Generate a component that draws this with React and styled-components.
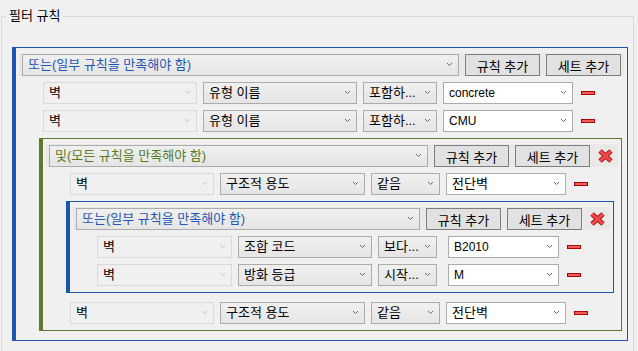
import React from 'react';
import styled, { createGlobalStyle } from 'styled-components';

const GlobalStyle = createGlobalStyle`
	html, body {
		margin: 0;
		padding: 0;
		background: #f0f0f0;
		overflow: hidden;
	}
	body {
		font-family: 'Liberation Sans', 'Noto Sans CJK KR', sans-serif;
		font-size: 13px;
		color: #000;
	}
`;

const TONES = {
	or: { border: '#1f56ad', text: '#1f58b4', label: '또는(일부 규칙을 만족해야 함)' },
	and: { border: '#5b7d2b', text: '#5a7a24', label: '및(모든 규칙을 만족해야 함)' },
};

// column widths for the rule rows at each nesting depth
const COLUMNS = [
	{ widths: [154, 154, 74, 130], valueGap: 6 },
	{ widths: [144, 145, 69, 120], valueGap: 6 },
	{ widths: [135, 134, 59, 111], valueGap: 11 },
];

const tree = {
	kind: 'or',
	width: 616,
	items: [
		{ rule: ['벽', '유형 이름', '포함하...', 'concrete'] },
		{ rule: ['벽', '유형 이름', '포함하...', 'CMU'] },
		{
			kind: 'and',
			width: 583,
			removable: true,
			items: [
				{ rule: ['벽', '구조적 용도', '같음', '전단벽'] },
				{
					kind: 'or',
					width: 548,
					removable: true,
					items: [
						{ rule: ['벽', '조합 코드', '보다...', 'B2010'] },
						{ rule: ['벽', '방화 등급', '시작...', 'M'] },
					],
				},
				{ rule: ['벽', '구조적 용도', '같음', '전단벽'] },
			],
		},
	],
};

const Frame = styled.fieldset`
	box-sizing: border-box;
	width: 633px;
	height: 346px;
	margin: 7px 0 0 1px;
	padding: 22px 5px 0 10px;
	border: 1px solid #dcdcdc;
	min-inline-size: 0;
`;

const Legend = styled.legend`
	padding: 0 3px;
	margin-left: -6px;
	line-height: 18px;
`;

const Group = styled.div`
	box-sizing: border-box;
	width: ${props => props.$w}px;
	margin-left: ${props => (props.$nested ? 20 : 0)}px;
	margin-bottom: ${props => (props.$nested ? 3 : 0)}px;
	padding: 5px 3px 6px 3px;
	border: 1px solid ${props => props.$color};
	border-left-width: 4px;
	display: flex;
	flex-direction: column;
	gap: 6px;
`;

const Header = styled.div`
	display: flex;
	align-items: center;
	padding: 1px 3px 0 3px;
	background: #e9e9e9;
`;

const comboBorder = {
	header: '#acacac',
	normal: '#acacac',
	disabled: '#d9d9d9',
	edit: '#acacac',
};

const comboBg = {
	header: 'linear-gradient(#f0f0f0, #e5e5e5)',
	normal: 'linear-gradient(#f0f0f0, #e5e5e5)',
	disabled: '#f0f0f0',
	edit: '#ffffff',
};

const Combo = styled.div`
	box-sizing: border-box;
	height: 22px;
	width: ${props => (props.$w ? `${props.$w}px` : 'auto')};
	flex: ${props => (props.$w ? 'none' : '1')};
	margin-left: ${props => props.$ml || 0}px;
	display: flex;
	align-items: center;
	justify-content: space-between;
	padding: 0 5px 0 5px;
	border: 1px solid ${props => comboBorder[props.$kind]};
	background: ${props => comboBg[props.$kind]};
	color: ${props => props.$tone || '#000'};
	white-space: nowrap;
	overflow: hidden;
`;

const ComboText = styled.span`
	overflow: hidden;
	line-height: 20px;
	font-size: ${props => (props.$latin ? 12 : 13)}px;
`;

const ChevronIcon = styled.svg`
	flex: none;
	margin-top: -2px;
`;

const Button = styled.button`
	box-sizing: border-box;
	flex: none;
	width: 75px;
	height: 22px;
	margin-left: 6px;
	padding: 0;
	border: 1px solid #7d7d7d;
	background: #e1e1e1;
	font: inherit;
	color: #000;
`;

const Remove = styled.div`
	flex: none;
	width: 15px;
	height: 14px;
	margin: 0 2px 0 8px;
	display: flex;
`;

const Row = styled.div`
	display: flex;
	align-items: center;
	gap: 6px;
	height: 22px;
	margin-left: 24px;
`;

const Minus = styled.span`
	box-sizing: border-box;
	flex: none;
	width: 14px;
	height: 4px;
	margin-left: 2px;
	background: #f25c5c;
	border: 1px solid #b00000;
`;

const Chevron = ({ light }) => (
	<ChevronIcon width='7' height='5' viewBox='0 0 7 5'>
		<path d='M1 1l2.5 2.5L6 1' fill='none' stroke={light ? '#c6c6c6' : '#6a6a6a'} strokeWidth='1' />
	</ChevronIcon>
);

const Cross = () => (
	<svg width='15' height='14' viewBox='0 0 15 14'>
		<path d='M2 2L13 12M13 2L2 12' stroke='#b41414' strokeWidth='5' />
		<path d='M2 2L13 12M13 2L2 12' stroke='#ee4c4c' strokeWidth='3' />
	</svg>
);

const isLatin = text => /^[\x20-\x7e]+$/.test(text);

const Select = ({ kind = 'normal', w, ml, tone, children }) => (
	<Combo $kind={kind} $w={w} $ml={ml} $tone={tone}>
		<ComboText $latin={isLatin(children)}>{children}</ComboText>
		<Chevron light={kind === 'disabled'} />
	</Combo>
);

const Rule = ({ values, depth }) => {
	const { widths, valueGap } = COLUMNS[depth];
	return (
		<Row>
			<Select kind='disabled' w={widths[0]}>{values[0]}</Select>
			<Select w={widths[1]}>{values[1]}</Select>
			<Select w={widths[2]}>{values[2]}</Select>
			<Select kind='edit' w={widths[3]} ml={valueGap - 6}>{values[3]}</Select>
			<Minus />
		</Row>
	);
};

const RuleSet = ({ node, depth }) => {
	const tone = TONES[node.kind];
	return (
		<Group $w={node.width} $color={tone.border} $nested={depth > 0}>
			<Header>
				<Select kind='header' tone={tone.text}>{tone.label}</Select>
				<Button>규칙 추가</Button>
				<Button>세트 추가</Button>
				{node.removable ? (
					<Remove>
						<Cross />
					</Remove>
				) : null}
			</Header>
			{node.items.map((item, i) =>
				item.rule ? (
					<Rule key={i} values={item.rule} depth={depth} />
				) : (
					<RuleSet key={i} node={item} depth={depth + 1} />
				)
			)}
		</Group>
	);
};

const App = () => (
	<>
		<GlobalStyle />
		<Frame>
			<Legend>필터 규칙</Legend>
			<RuleSet node={tree} depth={0} />
		</Frame>
	</>
);

export default App;
